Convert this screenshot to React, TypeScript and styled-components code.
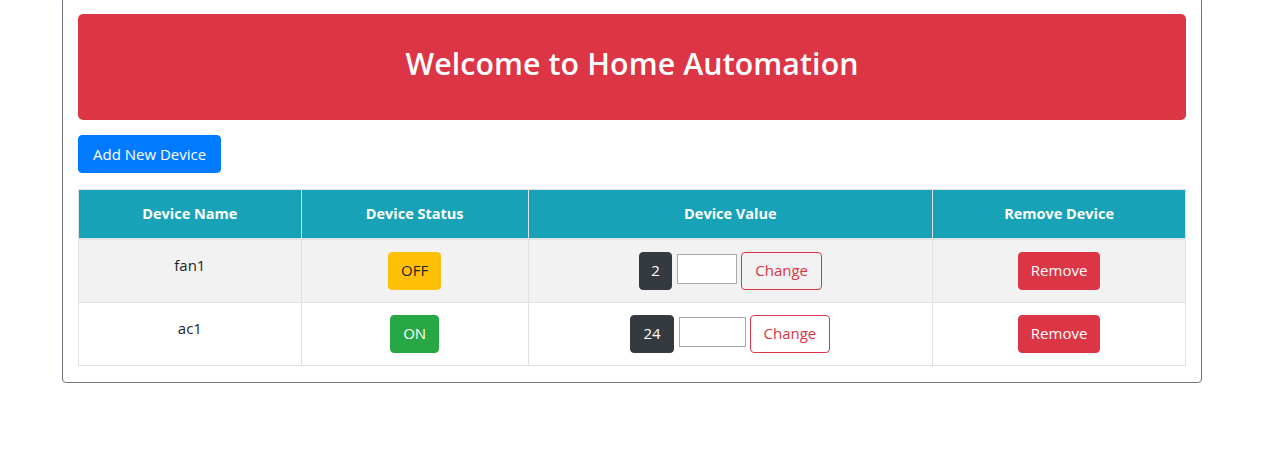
import React from 'react'
import styled, { createGlobalStyle } from 'styled-components'

const GlobalStyle = createGlobalStyle`
  body {
    margin: 0;
    background: #ffffff;
    font-family: "Open Sans", "Noto Sans", "Liberation Sans", sans-serif;
    font-size: 15px;
    color: #212529;
  }
  * {
    box-sizing: border-box;
  }
`

const Card = styled.div`
  width: 1140px;
  margin: -3px 0 0 62px;
  padding: 16px 15px 16px 15px;
  border: 1px solid #6c757d;
  border-radius: 4px;
`

const Jumbotron = styled.div`
  display: flex;
  align-items: center;
  justify-content: center;
  height: 106px;
  padding-bottom: 8px;
  background-color: #dc3545;
  border-radius: 5px;

  h1 {
    margin: 0;
    color: #ffffff;
    font-size: 30.3px;
    font-weight: 600;
    letter-spacing: 0.1px;
  }
`

const Toolbar = styled.div`
  display: flex;
  padding: 15px 0 16px 0;
`

const Button = styled.button<{ variant: 'primary' | 'warning' | 'success' | 'danger' | 'dark' | 'outline' }>`
  display: inline-flex;
  align-items: center;
  justify-content: center;
  height: 38px;
  padding: 0 12px;
  border-radius: 4px;
  font-family: inherit;
  font-size: 15px;
  line-height: 1;
  cursor: pointer;
  border: 1px solid ${({ variant }) => ({
    primary: '#007bff',
    warning: '#ffc107',
    success: '#28a745',
    danger: '#dc3545',
    dark: '#343a40',
    outline: '#dc3545'
  }[variant])};
  background-color: ${({ variant }) => ({
    primary: '#007bff',
    warning: '#ffc107',
    success: '#28a745',
    danger: '#dc3545',
    dark: '#343a40',
    outline: 'transparent'
  }[variant])};
  color: ${({ variant }) => (variant === 'warning' ? '#212529' : variant === 'outline' ? '#dc3545' : '#ffffff')};
`

const AddButton = styled(Button)`
  padding: 0 14px;
`

const ChangeButton = styled(Button)`
  padding: 0 13px;
`

const Table = styled.table`
  width: 100%;
  border-collapse: collapse;
  border: 1px solid #dee2e6;

  th {
    height: 49px;
    padding: 0 12px;
    background-color: #17a2b8;
    color: #ffffff;
    font-size: 14.5px;
    font-weight: 700;
    text-align: center;
    vertical-align: middle;
    border: 1px solid #dee2e6;
    border-bottom-width: 2px;
    border-top: none;
  }

  td {
    padding: 12px;
    height: 63px;
    text-align: center;
    vertical-align: top;
    border: 1px solid #dee2e6;
  }
`

const Row = styled.tr<{ striped: boolean }>`
  background-color: ${({ striped }) => (striped ? '#f2f2f2' : '#ffffff')};
`

const NameText = styled.div`
  line-height: 26px;
`

const ValueGroup = styled.div`
  display: flex;
  align-items: flex-start;
  justify-content: center;
  gap: 4px;
`

const ValueBadge = styled(Button)`
  margin-right: 1px;
  cursor: default;
`

const ValueInput = styled.input<{ size: number }>`
  width: ${({ size }) => size}px;
  height: 30px;
  margin-top: 2px;
  border: 1px solid #a9a9a9;
  border-radius: 0;
  background: #ffffff;
  font-family: inherit;
  font-size: 14px;
`

const devices = [
  { name: 'fan1', on: false, value: 2, inputWidth: 60, pad: 11.5 },
  { name: 'ac1', on: true, value: 24, inputWidth: 67, pad: 12 }
]

export default function App() {
  return (
    <>
      <GlobalStyle />
      <Card>
        <Jumbotron>
          <h1>Welcome to Home Automation</h1>
        </Jumbotron>
        <Toolbar>
          <AddButton variant="primary">Add New Device</AddButton>
        </Toolbar>
        <Table>
          <colgroup>
            <col style={{ width: 223 }} />
            <col style={{ width: 227 }} />
            <col style={{ width: 405 }} />
            <col style={{ width: 253 }} />
          </colgroup>
          <thead>
            <tr>
              <th>Device Name</th>
              <th>Device Status</th>
              <th>Device Value</th>
              <th>Remove Device</th>
            </tr>
          </thead>
          <tbody>
            {devices.map((d, i) => (
              <Row key={d.name} striped={i % 2 === 0}>
                <td>
                  <NameText>{d.name}</NameText>
                </td>
                <td>
                  <Button variant={d.on ? 'success' : 'warning'}>{d.on ? 'ON' : 'OFF'}</Button>
                </td>
                <td>
                  <ValueGroup>
                    <ValueBadge as="span" variant="dark" style={{ padding: `0 ${d.pad}px` }}>
                      {d.value}
                    </ValueBadge>
                    <ValueInput type="text" size={d.inputWidth} />
                    <ChangeButton variant="outline">Change</ChangeButton>
                  </ValueGroup>
                </td>
                <td>
                  <Button variant="danger">Remove</Button>
                </td>
              </Row>
            ))}
          </tbody>
        </Table>
      </Card>
    </>
  )
}
